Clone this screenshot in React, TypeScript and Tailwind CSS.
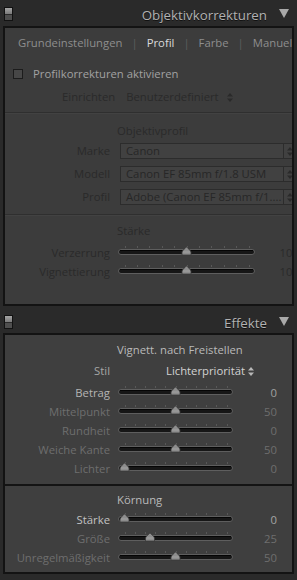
import React from "react";

const FONT = { fontFamily: '"Open Sans", "Noto Sans", sans-serif' };

function SwitchIcon() {
  return (
    <div className="w-[9px] h-[14px] border border-[#121212] flex flex-col">
      <div className="h-[6px] bg-gradient-to-b from-[#a6a6a6] to-[#7a7a7a]" />
      <div className="flex-1 bg-[#4e4e4e] border-t border-[#2a2a2a]" />
    </div>
  );
}

function Triangle() {
  return (
    <svg width="10" height="9" viewBox="0 0 10 9">
      <polygon points="0,0 10,0 5,9" fill="#a9a9a9" />
    </svg>
  );
}

function Header({ title }: { title: string }) {
  return (
    <div className="flex items-center pl-[4px] pr-[8px]">
      <SwitchIcon />
      <div className="flex-1" />
      <span className="mt-[4px] text-[13.3px] leading-none text-[#b2b2b2] mr-[12px] [text-shadow:0_1px_0_#111]">
        {title}
      </span>
      <Triangle />
    </div>
  );
}

function UpDown({ color }: { color: string }) {
  return (
    <svg width="6" height="9" viewBox="0 0 6 9">
      <polygon points="3,0 6,3.5 0,3.5" fill={color} />
      <polygon points="0,5.5 6,5.5 3,9" fill={color} />
    </svg>
  );
}

function Slider({ width, pos }: { width: number; pos: number }) {
  const inset = 6.5;
  const ticks = Array.from({ length: 11 }, (_, i) => inset + (i * (width - 2 * inset)) / 10);
  const tx = inset + pos * (width - 2 * inset);
  return (
    <svg width={width} height="19" viewBox={`0 0 ${width} 19`} className="block shrink-0">
      {ticks.map((x, i) => (
        <rect key={i} x={Math.round(x)} y="3" width="1" height="2" fill="#585858" />
      ))}
      <rect x="0.5" y="6.5" width={width - 1} height="5" rx="2.5" fill="#161616" stroke="#5e5e5e" />
      <rect x="2" y="7" width={width - 4} height="1" fill="#050505" />
      <path
        d={`M ${tx - 4.5} 12 L ${tx - 4.5} 9 Q ${tx - 4} 7 ${tx - 1.5} 5.5 L ${tx} 3.8 L ${tx + 1.5} 5.5 Q ${tx + 4} 7 ${tx + 4.5} 9 L ${tx + 4.5} 12 Z`}
        fill="#8d8d8d"
        stroke="#3a3a3a"
        strokeWidth="0.8"
      />
      <rect x={tx - 3.5} y="8.5" width="7" height="1" fill="#a2a2a2" />
    </svg>
  );
}

function SliderRow({
  label,
  value,
  width,
  pos,
  labelColor,
  valueColor,
}: {
  label: string;
  value: string;
  width: number;
  pos: number;
  labelColor: string;
  valueColor: string;
}) {
  return (
    <div className="h-[19px] flex items-center">
      <div className={`w-[105px] shrink-0 text-right text-[11.3px] leading-none ${labelColor}`}>{label}</div>
      <div className="w-[8px] shrink-0" />
      <Slider width={width} pos={pos} />
      <div className={`w-[44px] shrink-0 text-right text-[11.3px] leading-none ${valueColor}`}>{value}</div>
    </div>
  );
}

function SelectRow({ label, value }: { label: string; value: string }) {
  return (
    <div className="h-[16px] flex items-center">
      <div className="w-[105px] shrink-0 text-right text-[11.3px] leading-none text-[#2a2a2a]">{label}</div>
      <div className="w-[10px] shrink-0" />
      <div className="w-[180px] h-[16px] shrink-0 border border-[#2c2c2c] bg-[#414141] flex items-center">
        <div className="flex-1 pl-[5px] text-[11.3px] leading-none text-[#272727] whitespace-nowrap">
          {value}
        </div>
        <div className="w-[16px] h-full border-l border-[#2c2c2c] flex items-center pl-[3px]">
          <UpDown color="#2a2a2a" />
        </div>
      </div>
    </div>
  );
}

export default function App() {
  const dimLabel = "text-[#6e6e6e]";
  const brightLabel = "text-[#b4b4b4]";
  const p1Label = "text-[#2a2a2a]";
  return (
    <div className="w-[297px] h-[580px] bg-[#2a2a2a] overflow-hidden select-none" style={FONT}>
      {/* Header 1 */}
      <div className="h-[26px] pt-[5px]">
        <Header title="Objektivkorrekturen" />
      </div>

      {/* Panel 1 */}
      <div className="ml-[3px] w-[291px] h-[280px] border-2 border-[#131313] bg-[#3c3c3c] overflow-hidden">
        <div className="w-[311px]">
          {/* Tabs */}
          <div className="h-[30px] flex items-center pl-[13px] gap-[9px] text-[11.3px] leading-none whitespace-nowrap">
            <span className="text-[#8e8e8e]">Grundeinstellungen</span>
            <span className="text-[#5e5e5e]">|</span>
            <span className="text-[#dadada]">Profil</span>
            <span className="text-[#5e5e5e]">|</span>
            <span className="text-[#8e8e8e]">Farbe</span>
            <span className="text-[#5e5e5e]">|</span>
            <span className="text-[#8e8e8e]">Manuell</span>
          </div>
          {/* Checkbox */}
          <div className="mt-[6px] h-[20px] flex items-center pl-[8px]">
            <div className="w-[10px] h-[10px] border border-[#1c1c1c] bg-[#474747]" />
            <span className="ml-[10px] text-[11.3px] leading-none text-[#a2a2a2]">Profilkorrekturen aktivieren</span>
          </div>
          {/* Einrichten */}
          <div className="mt-[3px] h-[20px] flex items-center pl-[57px] text-[11.3px] leading-none">
            <span className={p1Label}>Einrichten</span>
            <span className={`ml-[11px] ${p1Label}`}>Benutzerdefiniert</span>
            <span className="ml-[8px]">
              <UpDown color="#2a2a2a" />
            </span>
          </div>
          {/* separator */}
          <div className="mt-[5px] h-[1px] bg-[#2f2f2f]" />
          <div className="h-[1px] bg-[#424242]" />
          {/* Objektivprofil */}
          <div className="mt-[7px] h-[20px] flex items-center pl-[112px] text-[11.3px] leading-none text-[#2a2a2a]">
            Objektivprofil
          </div>
          <div className="mt-[2px] flex flex-col gap-[7px]">
            <SelectRow label="Marke" value="Canon" />
            <SelectRow label="Modell" value="Canon EF 85mm f/1.8 USM" />
            <SelectRow label="Profil" value="Adobe (Canon EF 85mm f/1...." />
          </div>
          {/* separator */}
          <div className="mt-[9px] h-[1px] bg-[#2f2f2f]" />
          <div className="h-[1px] bg-[#424242]" />
          <div className="mt-[5px] h-[20px] flex items-center pl-[112px] text-[11.3px] leading-none text-[#2a2a2a]">
            Stärke
          </div>
          <div className="mt-[2px]">
            <SliderRow label="Verzerrung" value="100" width={137} pos={0.5} labelColor={p1Label} valueColor={p1Label} />
            <SliderRow label="Vignettierung" value="100" width={137} pos={0.5} labelColor={p1Label} valueColor={p1Label} />
          </div>
        </div>
      </div>

      {/* Header 2 */}
      <div className="h-[27px] pt-[7px]">
        <Header title="Effekte" />
      </div>

      {/* Panel 2 */}
      <div className="ml-[3px] w-[291px] h-[241px] border-2 border-[#131313] bg-[#3f3f3f] overflow-hidden">
        <div className="mt-[5px] h-[20px] flex items-center pl-[112px] text-[11.3px] leading-none text-[#bababa] whitespace-nowrap">
          Vignett. nach Freistellen
        </div>
        <div className="mt-[1px] h-[20px] flex items-center text-[11.3px] leading-none">
          <div className="w-[105px] text-right text-[#a6a6a6]">Stil</div>
          <div className="ml-[56px] text-[#d2d2d2]">Lichterpriorität</div>
          <span className="ml-[3px]">
            <UpDown color="#b8b8b8" />
          </span>
        </div>
        <div className="mt-[2px]">
          <SliderRow label="Betrag" value="0" width={115} pos={0.5} labelColor={brightLabel} valueColor="text-[#a0a0a0]" />
          <SliderRow label="Mittelpunkt" value="50" width={115} pos={0.5} labelColor={dimLabel} valueColor={dimLabel} />
          <SliderRow label="Rundheit" value="0" width={115} pos={0.5} labelColor={dimLabel} valueColor={dimLabel} />
          <SliderRow label="Weiche Kante" value="50" width={115} pos={0.5} labelColor={dimLabel} valueColor={dimLabel} />
          <SliderRow label="Lichter" value="0" width={115} pos={0} labelColor={dimLabel} valueColor={dimLabel} />
        </div>
        <div className="mt-[6px] h-[2px] bg-[#141414]" />
        <div className="mt-[4px] h-[20px] flex items-center pl-[112px] text-[11.3px] leading-none text-[#bababa]">
          Körnung
        </div>
        <div>
          <SliderRow label="Stärke" value="0" width={115} pos={0} labelColor="text-[#c2c2c2]" valueColor="text-[#a4a4a4]" />
          <SliderRow label="Größe" value="25" width={115} pos={0.25} labelColor={dimLabel} valueColor={dimLabel} />
          <SliderRow label="Unregelmäßigkeit" value="50" width={115} pos={0.5} labelColor={dimLabel} valueColor={dimLabel} />
        </div>
      </div>
    </div>
  );
}
